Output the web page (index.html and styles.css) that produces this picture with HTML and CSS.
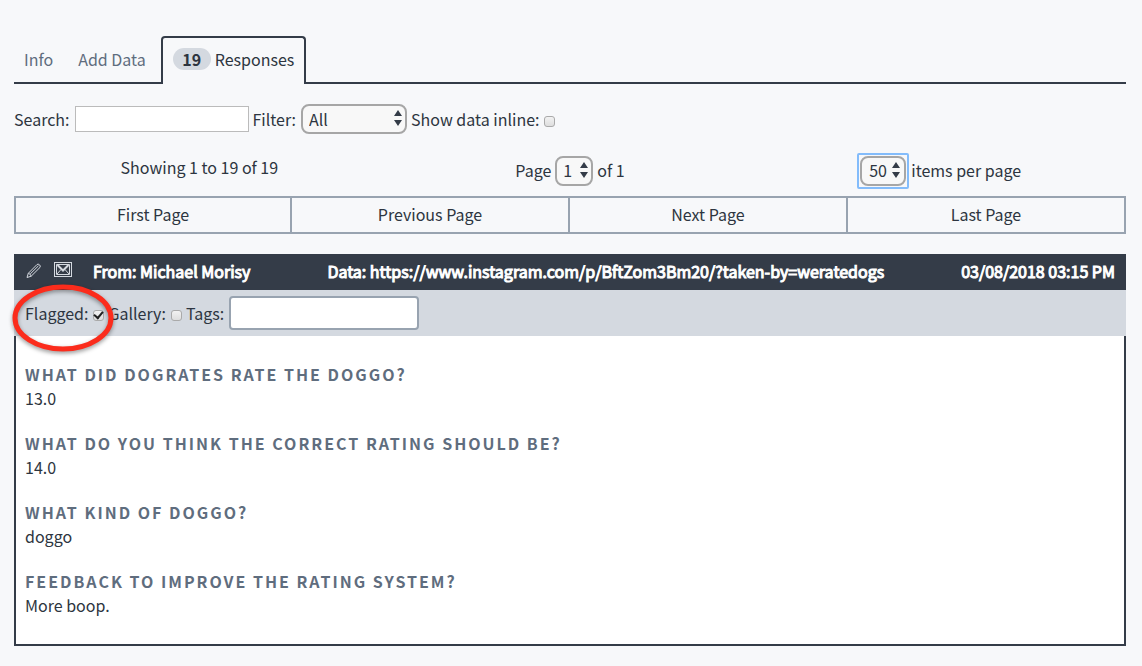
FILE: index.html
```html
<!DOCTYPE html>
<html lang="en">
<head>
<meta charset="utf-8">
<meta name="viewport" content="width=device-width, initial-scale=1">
<title>Responses</title>
<link rel="stylesheet" href="styles.css">
</head>
<body>
<nav class="tabs">
  <a class="tab" href="#info">Info</a>
  <a class="tab" href="#add-data">Add Data</a>
  <a class="tab tab-active" href="#responses"><span class="badge">19</span>Responses</a>
</nav>
<main>
  <form class="filters">
    <label for="search">Search:</label>
    <input class="search" id="search" type="text">
    <label for="filter">Filter:</label>
    <span class="select select-filter">
      <select id="filter"><option>All</option></select>
      <svg class="arrows" viewBox="0 0 8 16" aria-hidden="true"><path d="M4 0L8 6H0zM4 16L0 10H8z"/></svg>
    </span>
    <label for="inline">Show data inline:</label>
    <input class="check" id="inline" type="checkbox">
  </form>

  <div class="paging">
    <p class="showing">Showing 1 to 19 of 19</p>
    <div class="paging-item">
      <label for="page">Page</label>
      <span class="select select-page">
        <select id="page"><option>1</option></select>
        <svg class="arrows" viewBox="0 0 8 16" aria-hidden="true"><path d="M4 0L8 6H0zM4 16L0 10H8z"/></svg>
      </span>
      <span class="total">of 1</span>
    </div>
    <div class="paging-item paging-size">
      <span class="select select-size">
        <select id="size"><option>50</option></select>
        <svg class="arrows" viewBox="0 0 8 16" aria-hidden="true"><path d="M4 0L8 6H0zM4 16L0 10H8z"/></svg>
      </span>
      <label for="size">items per page</label>
    </div>
  </div>

  <div class="pager">
    <button type="button">First Page</button>
    <button type="button">Previous Page</button>
    <button type="button">Next Page</button>
    <button type="button">Last Page</button>
  </div>

  <article class="response">
    <header class="response-head">
      <div class="sender">
        <a class="icon" href="#edit" aria-label="Edit">
          <svg width="16" height="16" viewBox="0 0 16 16"><path d="M1 14.500L2.300 10.300L11 1.500Q12.200 .6 13.500 1.800Q14.900 3.100 14 4.400L5.200 13.200ZM2.300 10.300Q4.600 10.800 5.200 13.200M4.200 11L12.500 2.800"/></svg>
        </a>
        <a class="icon icon-mail" href="#mail" aria-label="Email">
          <svg width="18" height="16" viewBox="0 0 18 16"><path d="M0 .5H18M.5 1V15M17.500 1V15M0 14.500H18M2.500 2.500H15.500V12.500H2.500ZM3 12L7 7.500M15 12L11 7.500"/><path class="fold" d="M3.500 3L9 8.500L14.500 3"/></svg>
        </a>
        <span>From: Michael Morisy</span>
      </div>
      <span>Data: https://www.instagram.com/p/BftZom3Bm20/?taken-by=weratedogs</span>
      <time datetime="2018-03-08T15:15">03/08/2018 03:15 PM</time>
    </header>
    <form class="response-tools">
      <label for="flagged">Flagged:</label>
      <input class="check" id="flagged" type="checkbox" checked>
      <label for="gallery">Gallery:</label>
      <input class="check" id="gallery" type="checkbox">
      <label for="tags">Tags:</label>
      <input class="tags" id="tags" type="text">
      <svg class="ring" width="112" height="80" viewBox="0 0 112 80" aria-hidden="true"><ellipse cx="56" cy="38" rx="48" ry="31"/></svg>
    </form>
    <dl class="answers">
      <div><dt>What did dogrates rate the doggo?</dt><dd>13.0</dd></div>
      <div><dt>What do you think the correct rating should be?</dt><dd>14.0</dd></div>
      <div><dt>What kind of doggo?</dt><dd>doggo</dd></div>
      <div><dt>Feedback to improve the rating system?</dt><dd>More boop.</dd></div>
    </dl>
  </article>
</main>
</body>
</html>
```

FILE: styles.css
```css
* {
  box-sizing: border-box;
}

body {
  margin: 0;
  padding: 36px 16px 20px 14px;
  background: #f7f8fa;
  color: #2d3540;
  font: 16px/24px "Noto Sans CJK JP", "Noto Sans", sans-serif;
}

input,
select,
button {
  margin: 0;
  color: inherit;
  font: inherit;
}

p,
dl,
dd {
  margin: 0;
}

.tabs {
  display: flex;
  height: 48px;
  border-bottom: 2px solid #343c48;
}

.tab {
  display: flex;
  align-items: center;
  height: 48px;
  margin-right: 5px;
  padding: 0 10px 2px;
  color: #5f6d7e;
  text-decoration: none;
}

.tab-active {
  padding-bottom: 4px;
  border: 2px solid #343c48;
  border-bottom: 0;
  border-radius: 4px 4px 0 0;
  background: #f7f8fa;
  color: #2d3540;
}

.badge {
  width: 38px;
  height: 22px;
  margin-right: 4px;
  border-radius: 11px;
  background: #d4d9e0;
  font-weight: 700;
  line-height: 22px;
  text-align: center;
}

.filters {
  display: flex;
  align-items: center;
  gap: 4px;
  height: 30px;
  margin-top: 20px;
}

.filters label,
.response-tools label {
  padding-right: 1px;
}

.search {
  width: 174px;
  height: 26px;
  padding: 0 4px;
  border: 1px solid #bbb;
  background: #fff;
}

.select {
  position: relative;
  display: inline-flex;
}

.select select {
  width: 100%;
  height: 30px;
  padding: 0 6px;
  appearance: none;
  border: 2px solid #a6a6a6;
  border-radius: 8px;
  background: #f8f8f8;
}

.select-filter {
  width: 106px;
}

.select-page {
  width: 38px;
}

.select-size {
  width: 52px;
  padding: 1px;
  border: 2px solid #83bcfb;
  border-radius: 2px;
}

.select-size select {
  padding: 0 7px;
}

.arrows {
  position: absolute;
  top: 50%;
  right: 5px;
  width: 8px;
  height: 16px;
  margin-top: -9px;
  fill: #343c48;
  pointer-events: none;
}

.select-size .arrows {
  right: 7px;
}

.check {
  display: grid;
  place-items: center;
  width: 11px;
  height: 11px;
  margin-top: 4px;
  appearance: none;
  border: 1px solid #aaa;
  border-radius: 3px;
  background: linear-gradient(#f2f2f2, #dedede);
}

.check:checked::after {
  content: "";
  width: 7px;
  height: 4px;
  border: solid #222;
  border-width: 0 0 2px 2px;
  transform: translateY(-1px) rotate(-50deg);
}

.paging {
  display: grid;
  grid-template-columns: repeat(3, 1fr);
  align-items: center;
  height: 36px;
  margin-top: 19px;
}

.showing {
  padding-bottom: 8px;
  text-align: center;
}

.paging-item {
  display: flex;
  align-items: center;
  justify-content: center;
  gap: 4px;
}

.paging-item label,
.total {
  padding-bottom: 3px;
}

.paging-size {
  gap: 2px;
  padding-right: 3px;
}

.select-page select,
.select-size select {
  padding-bottom: 2px;
}

.pager {
  display: grid;
  grid-template-columns: repeat(4, 1fr);
  margin-top: 7px;
}

.pager button {
  height: 38px;
  padding: 0 0 3px;
  border: 2px solid #98a3b0;
  background: none;
}

.pager button + button {
  border-left: 0;
}

.response {
  margin-top: 20px;
}

.response-head {
  display: flex;
  align-items: center;
  justify-content: space-between;
  height: 36px;
  padding: 0 11px 2px 12px;
  background: #343c48;
  color: #fff;
  -webkit-text-stroke: 1px #fff;
}

.sender {
  display: flex;
  align-items: center;
}

.icon {
  display: flex;
  margin-right: 12px;
}

.icon-mail {
  margin-right: 21px;
  padding-bottom: 3px;
}

.icon svg {
  fill: none;
  stroke: #d4d9e0;
  stroke-width: 1;
}

.icon .fold {
  stroke-width: 2;
}

.response-tools {
  position: relative;
  display: flex;
  align-items: center;
  gap: 4px;
  height: 46px;
  padding: 0 11px;
  background: #d4d9e0;
}

.tags {
  width: 190px;
  height: 34px;
  padding: 0 8px;
  border: 2px solid #98a3b0;
  border-radius: 4px;
  background: #fff;
}

.ring {
  position: absolute;
  top: -10px;
  left: -7px;
  fill: none;
  stroke: #fb2c1c;
  stroke-width: 5;
  filter: drop-shadow(0 2px 2px rgba(0, 0, 0, .4));
  pointer-events: none;
}

.answers {
  display: grid;
  gap: 21px;
  padding: 26px 9px 27px;
  border: solid #343c48;
  border-width: 0 2px 2px;
  background: #fff;
}

.answers dt {
  color: #5f6d7e;
  font-weight: 700;
  letter-spacing: 2px;
  text-transform: uppercase;
}
```
